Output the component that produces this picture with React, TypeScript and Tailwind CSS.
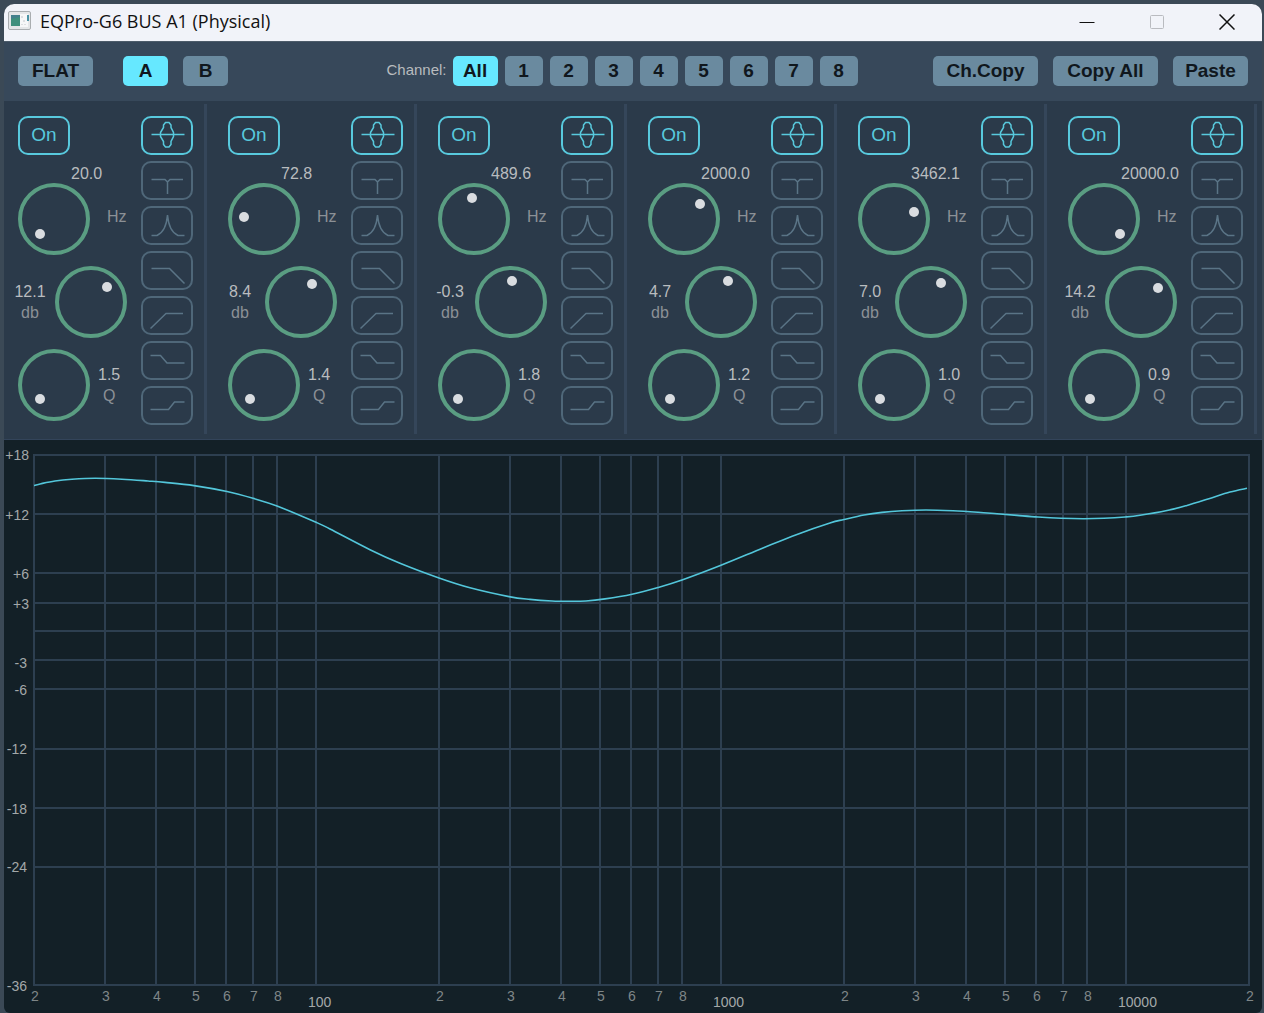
import { useState, type ReactNode } from "react";

type Dot = [number, number];

interface Band {
  freq: string;
  gain: string;
  q: string;
  freqDot: Dot;
  gainDot: Dot;
  qDot: Dot;
}

const BANDS: Band[] = [
  { freq: "20.0", gain: "12.1", q: "1.5", freqDot: [-14, 15], gainDot: [16, -15], qDot: [-14, 14] },
  { freq: "72.8", gain: "8.4", q: "1.4", freqDot: [-20, -2], gainDot: [11, -18], qDot: [-14, 14] },
  { freq: "489.6", gain: "-0.3", q: "1.8", freqDot: [-2, -21], gainDot: [1, -21], qDot: [-16, 14] },
  { freq: "2000.0", gain: "4.7", q: "1.2", freqDot: [16, -15], gainDot: [7, -21], qDot: [-14, 14] },
  { freq: "3462.1", gain: "7.0", q: "1.0", freqDot: [20, -7], gainDot: [10, -19], qDot: [-14, 14] },
  { freq: "20000.0", gain: "14.2", q: "0.9", freqDot: [16, 15], gainDot: [17, -14], qDot: [-14, 14] },
];

const FILTERS = [
  { name: "Peaking", d: "M10.5 18.5H43.5M19.5 18.500V16.500L22.500 11.500V9L24.500 6.500H28L30 9V11.500L32.500 16.500V20.500L30 25.500V28.500L28 31H24.500L22.500 28.500V25.500L19.500 20.500Z" },
  { name: "Notch", d: "M10.5 18.5H24L26.5 21V33M26.500 21L29 18.500H42" },
  { name: "Band pass", d: "M10.5 29.5H16C21.500 27 25.500 21 26.500 9C27.500 21 31.500 27 37 29.500H43.500" },
  { name: "Low pass", d: "M10.5 17.5H28.500L43.500 32.500" },
  { name: "High pass", d: "M9.5 32.5L25 17.500H42" },
  { name: "Low shelf", d: "M9.5 14.5H19.500L26 22H43.500" },
  { name: "High shelf", d: "M9.5 23.5H27.500L33.500 16H43.500" },
];

function ToolButton({ children, active, className, onClick }: { children: ReactNode; active?: boolean; className: string; onClick?: () => void }) {
  return (
    <button
      type="button"
      aria-pressed={active}
      onClick={onClick}
      className={`h-[30px] shrink-0 rounded-[5px] text-[19px] leading-[30px] font-bold text-[#10171d] ${active ? "bg-[#66e8ff]" : "bg-[#6a8a9f]"} ${className}`}
    >
      {children}
    </button>
  );
}

function Knob({ dot, label, value }: { dot: Dot; label: string; value: string }) {
  const angle = Math.round((Math.atan2(dot[0], -dot[1]) * 180) / Math.PI);
  return (
    <label className="relative block size-[72px] shrink-0">
      <svg viewBox="0 0 72 72" className="size-full" aria-hidden="true">
        <circle cx="36" cy="36" r="34" fill="none" stroke="#5a9d82" strokeWidth="4" />
        <circle cx={36 + dot[0]} cy={36 + dot[1]} r="5" fill="#d9dce0" />
      </svg>
      <input
        type="range"
        min={-135}
        max={135}
        defaultValue={angle}
        aria-label={label}
        aria-valuetext={value}
        className="absolute inset-0 size-full cursor-pointer opacity-0"
      />
    </label>
  );
}

function BandPanel({ band, index }: { band: Band; index: number }) {
  const [on, setOn] = useState(true);
  const [filter, setFilter] = useState(0);
  const name = `Band ${index + 1}`;
  return (
    <section aria-label={name} className="flex justify-between border-r-[3px] border-[#35465a] pt-3 pr-[11px] pb-[9px] pl-2.5">
      <div className="flex flex-col">
        <button
          type="button"
          aria-pressed={on}
          onClick={() => setOn(!on)}
          className={`ml-1 h-[39px] w-[52px] rounded-[10px] border-2 pb-0.5 text-[19px] leading-none ${on ? "border-[#58c9dd] text-[#58c9dd]" : "border-[#566f80] text-[#566f80]"}`}
        >
          On
        </button>
        <div className="mt-2.5 pl-[57px] text-base leading-[18px] text-[#b9bcbf]">{band.freq}</div>
        <div className="ml-1 flex items-center gap-[17px]">
          <Knob dot={band.freqDot} label={`${name} frequency`} value={`${band.freq} Hz`} />
          <span className="pb-1 text-base text-[#8b9096]">Hz</span>
        </div>
        <div className="mt-[11px] flex items-center">
          <div className="w-8 text-center text-base leading-[21px] text-[#b9bcbf]">
            <div className="-mx-2">{band.gain}</div>
            <div className="text-[#8b9096]">db</div>
          </div>
          <div className="ml-[9px]">
            <Knob dot={band.gainDot} label={`${name} gain`} value={`${band.gain} dB`} />
          </div>
        </div>
        <div className="mt-[11px] ml-1 flex items-center gap-2">
          <Knob dot={band.qDot} label={`${name} Q`} value={band.q} />
          <div className="text-center text-base leading-[21px] text-[#b9bcbf]">
            <div>{band.q}</div>
            <div className="text-[#8b9096]">Q</div>
          </div>
        </div>
      </div>
      <div className="flex flex-col gap-1.5">
        {FILTERS.map((f, i) => (
          <button
            key={f.name}
            type="button"
            aria-label={`${name} ${f.name}`}
            aria-pressed={filter === i}
            onClick={() => setFilter(i)}
            className={`h-[39px] w-[52px] rounded-[10px] border-2 ${filter === i ? "border-[#58c9dd] text-[#58c9dd]" : "border-[#4f6779] text-[#5a7486]"}`}
          >
            <svg viewBox="0 0 52 39" className="-m-0.5 h-[39px] w-[52px]" fill="none" stroke="currentColor" strokeWidth={1.5} aria-hidden="true">
              <path d={f.d} />
            </svg>
          </button>
        ))}
      </div>
    </section>
  );
}

const H_LINES = [15, 74, 133, 163, 191, 220, 249, 309, 368, 427, 545];
const DB_LABELS: [string, number][] = [
  ["+18", 15], ["+12", 75], ["+6", 134], ["+3", 164], ["-3", 223], ["-6", 250], ["-12", 309], ["-18", 369], ["-24", 427], ["-36", 546],
];
const DECADES = [30, 435, 840];
const TICKS: [string, number][] = [["2", 0], ["3", 71], ["4", 122], ["5", 161], ["6", 192], ["7", 219], ["8", 243]];
const HUNDREDS: [string, number][] = [["100", 312], ["1000", 717], ["10000", 1122]];

const CURVE: Dot[] = [
  [30, 45.5], [37, 43.7], [51, 41], [68, 39.3], [91, 38.3], [118, 39.2], [144, 41], [161, 42.4], [190, 45.6], [223, 51.5], [249, 58.3], [273, 66],
  [312, 82.3], [326, 89], [366, 109.7], [396, 123.3], [435, 138], [466, 147.8], [505, 156.6], [526, 159.4], [548, 161], [565, 161.3], [582, 161],
  [601, 158.9], [628, 154.2], [654, 147.5], [678, 140], [717, 125.3], [759, 108], [793, 94.4], [826, 83], [840, 79.5], [860, 75],
  [878, 72.4], [898, 70.8], [922, 70], [949, 70.8], [974, 72.3], [993, 73.8], [1013, 75.4], [1034, 77], [1057, 78.2], [1079, 78.7], [1100, 78.3],
  [1121, 77], [1136, 75.3], [1163, 70.5], [1183, 65.4], [1204, 59], [1226, 52], [1243, 48.3],
];

function smoothPath(points: Dot[]) {
  let d = `M${points[0][0]} ${points[0][1]}`;
  for (let i = 0; i < points.length - 1; i++) {
    const a = points[Math.max(i - 1, 0)];
    const b = points[i];
    const c = points[i + 1];
    const e = points[Math.min(i + 2, points.length - 1)];
    d += `C${b[0] + (c[0] - a[0]) / 6} ${b[1] + (c[1] - a[1]) / 6} ${c[0] - (e[0] - b[0]) / 6} ${c[1] - (e[1] - b[1]) / 6} ${c[0]} ${c[1]}`;
  }
  return d;
}

function ResponseChart() {
  return (
    <svg viewBox="0 0 1258 573" className="block w-full" role="img" aria-label="Frequency response">
      <g stroke="#2d3f50" strokeWidth="2">
        {H_LINES.map((y) => (
          <line key={y} x1="29" x2="1246" y1={y} y2={y} />
        ))}
        {DECADES.flatMap((start) => TICKS.map(([t, dx]) => <line key={`${start}-${t}`} x1={start + dx} x2={start + dx} y1="15" y2="545" />))}
        {HUNDREDS.map(([t, x]) => (
          <line key={t} x1={x} x2={x} y1="15" y2="545" />
        ))}
        <line x1="1245" x2="1245" y1="15" y2="545" />
      </g>
      <g fill="#a3a8a9" fontSize="14">
        {DB_LABELS.map(([t, y]) => (
          <text key={t} x={t.startsWith("+") ? 25 : 23} y={y + 5} textAnchor="end">
            {t}
          </text>
        ))}
      </g>
      <g fill="#7f8688" fontSize="14" textAnchor="middle">
        {DECADES.flatMap((start) =>
          TICKS.map(([t, dx]) => (
            <text key={`${start}-${t}`} x={start + dx + 1} y="561">
              {t}
            </text>
          )),
        )}
        <text x="1246" y="561">2</text>
      </g>
      <g fill="#a3a8a9" fontSize="14">
        {HUNDREDS.map(([t, x]) => (
          <text key={t} x={x - 8} y="567">
            {t}
          </text>
        ))}
      </g>
      <path d={smoothPath(CURVE)} fill="none" stroke="#53c6da" strokeWidth="1.6" />
    </svg>
  );
}

function TitleBar() {
  return (
    <header className="flex h-[37px] items-center justify-between bg-[#f1f3f9] pl-1">
      <div className="flex items-center gap-[9px] pb-1">
        <svg viewBox="0 0 23 19" className="h-[19px] w-[23px]" aria-hidden="true">
          <rect x="0.500" y="0.500" width="22" height="18" rx="1.500" fill="#e4e6e8" stroke="#a9adb0" />
          <rect x="3" y="4" width="9" height="11" fill="#43808c" />
          <path d="M3 8L12 6V15H3Z" fill="#3f8f7c" />
          <rect x="12" y="3" width="8" height="13" fill="#f6f7f8" />
          <rect x="19" y="4" width="2" height="6" fill="#4b93a5" />
          <path d="M14 5V7M16 9V11M14 13V14M17 13V14" stroke="#c2c5ca" />
        </svg>
        <h1 className="font-['Open_Sans','Noto_Sans',sans-serif] text-lg leading-6 text-[#111]">EQPro-G6 BUS A1 (Physical)</h1>
      </div>
      <div className="flex h-full pb-0.5">
        <button type="button" aria-label="Minimize" className="flex w-[70px] items-center justify-center">
          <svg viewBox="0 0 16 16" className="size-4" aria-hidden="true"><path d="M0.500 8.500H15.500" stroke="#111" /></svg>
        </button>
        <button type="button" aria-label="Maximize" disabled className="flex w-[70px] items-center justify-center">
          <svg viewBox="0 0 16 16" className="size-4" fill="none" aria-hidden="true"><rect x="1.500" y="1.500" width="13" height="13" rx="1" stroke="#b9bbc0" /></svg>
        </button>
        <button type="button" aria-label="Close" className="flex w-[70px] items-center justify-center">
          <svg viewBox="0 0 16 16" className="size-4" fill="none" aria-hidden="true"><path d="M0.500 0.500L15.500 15.500M15.500 0.500L0.500 15.500" stroke="#111" strokeWidth="1.500" /></svg>
        </button>
      </div>
    </header>
  );
}

export default function App() {
  const [preset, setPreset] = useState("A");
  const [channel, setChannel] = useState("All");
  return (
    <div className="flex min-h-screen flex-col bg-[#3b4956] pt-1 pr-0.5 pl-1 font-['Liberation_Sans',Arial,sans-serif]">
      <main className="flex grow flex-col overflow-hidden rounded-t-[10px] rounded-b-md bg-[#132027]">
        <TitleBar />
        <div className="flex h-[60px] items-center justify-between border-t border-[#4d5c6a] bg-[#37485a] px-3.5 pb-0.5">
          <div className="flex">
            <ToolButton className="w-[75px]">FLAT</ToolButton>
            <div className="ml-[30px] flex gap-[15px]">
              {["A", "B"].map((p) => (
                <ToolButton key={p} className="w-[45px]" active={preset === p} onClick={() => setPreset(p)}>
                  {p}
                </ToolButton>
              ))}
            </div>
          </div>
          <div className="ml-[83px] flex items-center" role="group" aria-label="Channel">
            <span className="mr-[6px] text-[15px] text-[#b9bcbf]">Channel:</span>
            <div className="flex gap-[7px]">
              {["All", "1", "2", "3", "4", "5", "6", "7", "8"].map((c) => (
                <ToolButton key={c} className={c === "All" ? "w-[45px]" : "w-[38px]"} active={channel === c} onClick={() => setChannel(c)}>
                  {c}
                </ToolButton>
              ))}
            </div>
          </div>
          <div className="flex gap-[15px]">
            <ToolButton className="w-[105px]">Ch.Copy</ToolButton>
            <ToolButton className="w-[105px]">Copy All</ToolButton>
            <ToolButton className="w-[75px]">Paste</ToolButton>
          </div>
        </div>
        <div className="grid grid-cols-6 gap-x-[7px] border-b border-[#33445a] bg-[#2b3a4a] pt-[3px] pr-[5px] pb-[5px]">
          {BANDS.map((b, i) => (
            <BandPanel key={b.freq} band={b} index={i} />
          ))}
        </div>
        <ResponseChart />
      </main>
    </div>
  );
}
